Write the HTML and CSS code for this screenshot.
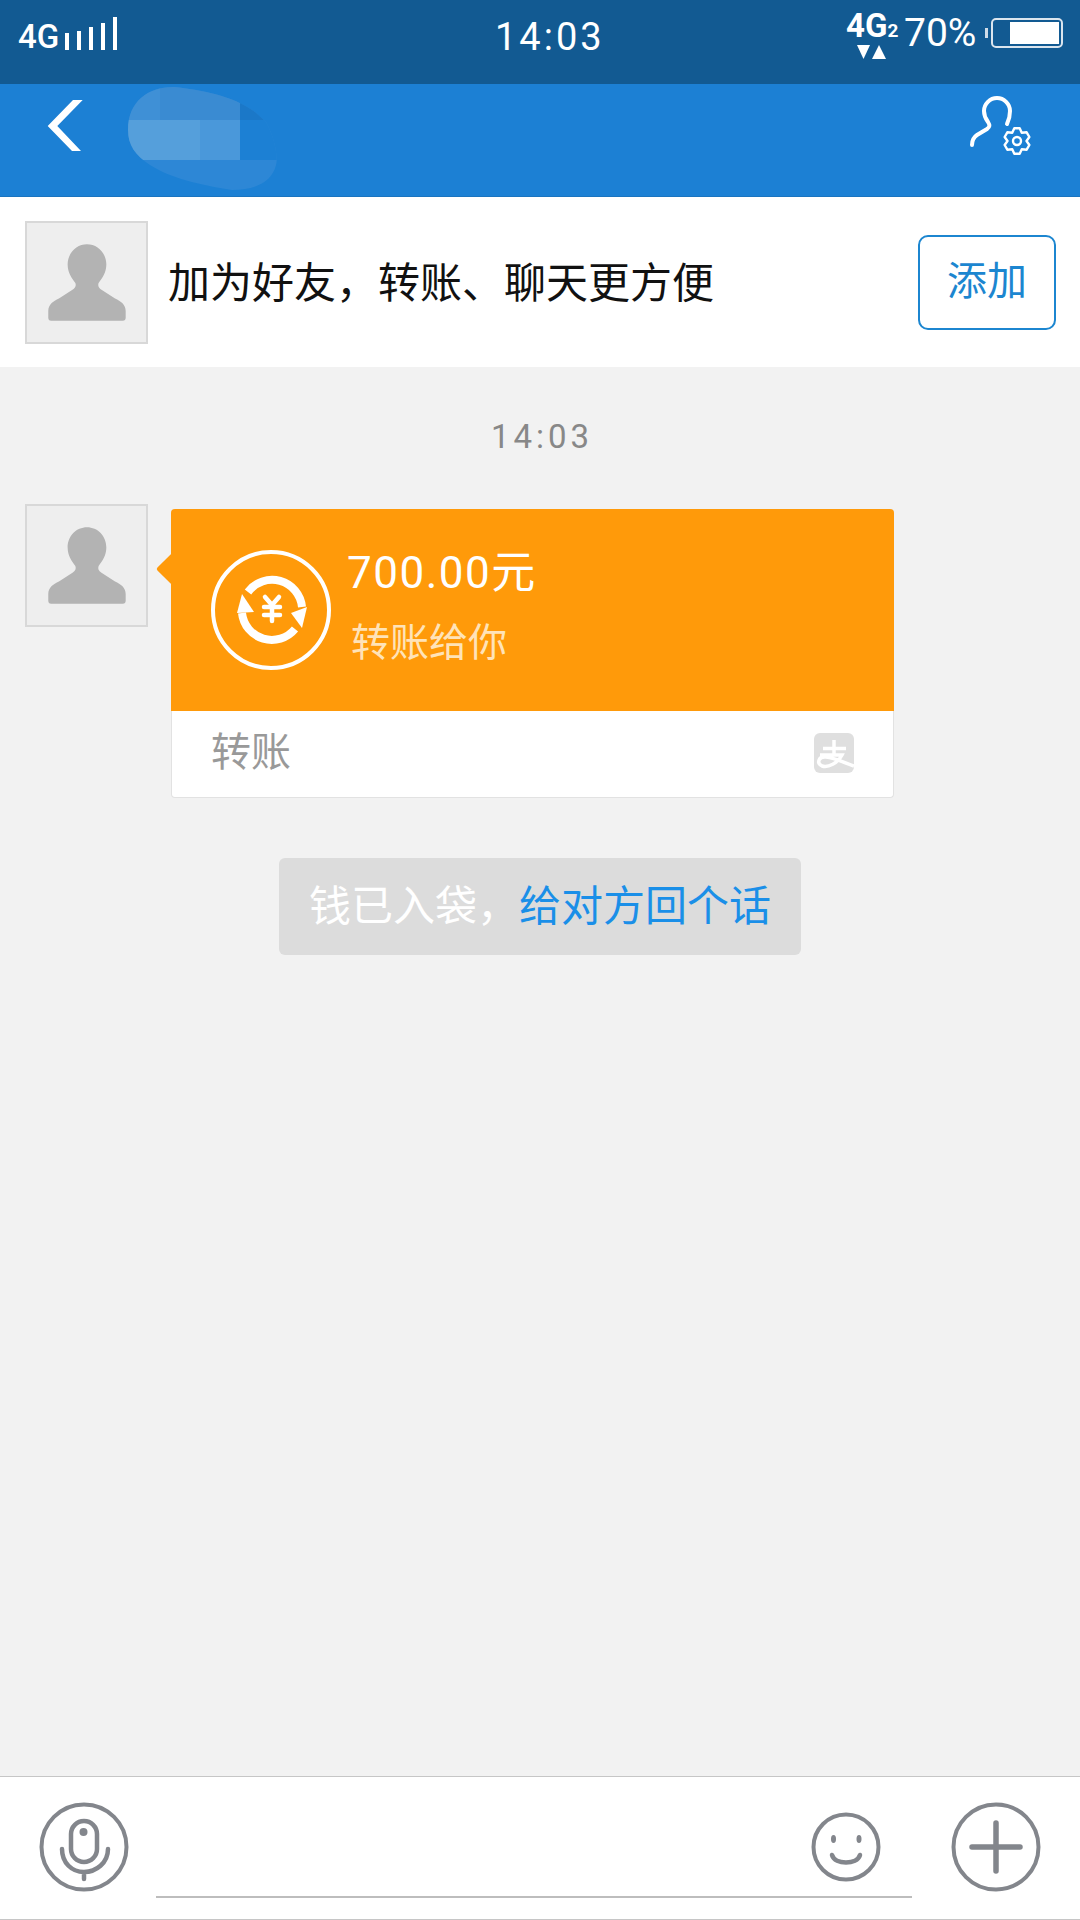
FILE: index.html
```html
<!DOCTYPE html>
<html lang="zh-CN">

<head>
    <meta charset="UTF-8">
    <meta name="viewport" content="width=device-width, initial-scale=1.0">
    <title>转账</title>
    <link rel="stylesheet" href="styles.css">
</head>

<body>
<div class="page">
    <div class="status">
        <div class="signal">
            <span class="net">4G</span>
            <div class="bars">
                <i class="bar b1"></i><i class="bar b2"></i><i class="bar b3"></i><i class="bar b4"></i><i class="bar b5"></i>
            </div>
        </div>
        <div class="clock">14:03</div>
        <div class="status-right">
            <div class="net2">
                <div class="net2-text">4G<small>2</small></div>
                <svg class="net2-arrows" viewBox="0 0 32 14"><polygon points="0,0 13,0 6.500,14" fill="#fff"/><polygon points="15,14 29,14 22,0" fill="#fff"/></svg>
            </div>
            <span class="percent">70%</span>
            <span class="nub"></span>
            <div class="battery"><span class="battery-fill"></span></div>
        </div>
    </div>

    <div class="nav">
        <svg class="back" viewBox="44 96 44 60"><polygon points="73,100 47.700,126 72,151 81,151 57.300,126 82.700,100" fill="#fff"/></svg>
        <svg class="smudge" viewBox="128 86 150 106">
            <defs>
                <clipPath id="blob"><path d="M128 130C128 100 150 86 175 87C200 90 232 95 255 112L266 122C276 140 278 160 276 165C272 182 255 190 232 190C200 185 170 178 150 165C135 155 128 145 128 130Z"/></clipPath>
            </defs>
            <g clip-path="url(#blob)">
                <rect x="128" y="86" width="150" height="106" fill="#2d87d6"/>
                <rect x="128" y="86" width="32" height="34" fill="#3f90d6"/>
                <rect x="160" y="86" width="80" height="34" fill="#3a8bd2"/>
                <rect x="240" y="86" width="38" height="34" fill="#1b78c8"/>
                <rect x="128" y="120" width="72" height="40" fill="#559fdb"/>
                <rect x="200" y="120" width="40" height="40" fill="#4a98da"/>
                <rect x="240" y="120" width="38" height="40" fill="#1c80d4"/>
            </g>
        </svg>
        <svg class="user-gear" viewBox="968 94 66 62">
            <path d="M972 145c0-5 2-8 5-10l10-6c3-2 3-4 1-7c-3-4-4-7-4-11c0-7 6-13 13-13s13 6 13 13c0 5-1 9-3 13" fill="none" stroke="#fff" stroke-width="4" stroke-linecap="round"/>
            <g transform="translate(1017 141)" fill="none" stroke="#fff" stroke-width="2.400" stroke-linejoin="round">
                <polygon points="-2.700,-12.700 2.700,-12.700 4.750,-8.200 9.660,-8.700 12.360,-4 9.500,0 12.360,4 9.660,8.700 4.750,8.200 2.700,12.700 -2.700,12.700 -4.750,8.200 -9.660,8.700 -12.360,4 -9.500,0 -12.360,-4 -9.660,-8.700 -4.750,-8.200"/>
                <circle r="4"/>
            </g>
        </svg>
    </div>

    <div class="friend-bar">
        <div class="avatar">
            <svg viewBox="0 0 123 123"><path d="M62 22c-11 0-20 9-20 21c0 8 4 14 8 19c1 3 0 5-3 7l-14 9c-6 3-11 6-11 13v7c0 2 1 3 3 3h74c2 0 3-1 3-3v-7c0-7-5-10-11-13l-14-9c-3-2-4-4-3-7c4-5 8-11 8-19c0-12-9-21-20-21z" fill="#b3b3b3"/></svg>
        </div>
        <div class="friend-text">加为好友，转账、聊天更方便</div>
        <div class="add-btn">添加</div>
    </div>

    <div class="chat">
        <div class="chat-time">14:03</div>
        <div class="msg">
            <div class="avatar">
                <svg viewBox="0 0 123 123"><path d="M62 22c-11 0-20 9-20 21c0 8 4 14 8 19c1 3 0 5-3 7l-14 9c-6 3-11 6-11 13v7c0 2 1 3 3 3h74c2 0 3-1 3-3v-7c0-7-5-10-11-13l-14-9c-3-2-4-4-3-7c4-5 8-11 8-19c0-12-9-21-20-21z" fill="#b3b3b3"/></svg>
            </div>
            <div class="card">
                <span class="card-arrow"></span>
                <div class="card-top">
                    <svg class="transfer-icon" viewBox="209 548 124 124">
                        <circle cx="271" cy="610" r="58" fill="none" stroke="#fff" stroke-width="4"/>
                        <g fill="none" stroke="#fff" stroke-width="8">
                            <path d="M248 592A30 30 0 0 1 302 607"/>
                            <path d="M295 629A30 30 0 0 1 242 613"/>
                        </g>
                        <polygon points="291,613 307,607 302,628" fill="#fff"/>
                        <polygon points="242,594 254,612 237,613" fill="#fff"/>
                        <g fill="none" stroke="#fff" stroke-width="4.500" stroke-linecap="round">
                            <polyline points="265,597 272,605 279,597"/>
                            <path d="M264 607H280M264 615H280M272 605V621"/>
                        </g>
                    </svg>
                    <div class="card-info">
                        <div class="amount">700.00元</div>
                        <div class="card-sub">转账给你</div>
                    </div>
                </div>
                <div class="card-bottom">
                    <span class="card-label">转账</span>
                    <svg class="alipay" viewBox="0 0 40 40">
                        <rect width="40" height="40" rx="6" fill="#dfdfdf"/>
                        <path d="M9 15.500H32M20 7V22M6 22H28C24 30 14 35 8 33C2 30 5 23 12 24C22 25 30 30 40 33" fill="none" stroke="#fff" stroke-width="3.500"/>
                    </svg>
                </div>
            </div>
        </div>
        <div class="tip">钱已入袋，<span class="tip-link">给对方回个话</span></div>
    </div>

    <div class="input-bar">
        <svg class="round-icon" viewBox="0 0 90 90">
            <circle cx="45" cy="45" r="42.500" fill="none" stroke="#83868c" stroke-width="4"/>
            <rect x="32" y="19" width="26" height="41" rx="13" fill="none" stroke="#83868c" stroke-width="4.500"/>
            <circle cx="44.500" cy="30" r="4" fill="#83868c"/>
            <path d="M23 47c0 14 10 23 22 23s24-9 24-23M45 70v7" fill="none" stroke="#83868c" stroke-width="4.500" stroke-linecap="round"/>
        </svg>
        <div class="input-line">
            <svg class="smile" viewBox="0 0 70 70">
                <circle cx="35" cy="35" r="32.500" fill="none" stroke="#83868c" stroke-width="4"/>
                <ellipse cx="22.500" cy="27" rx="2.500" ry="4" fill="#83868c"/>
                <ellipse cx="48" cy="27" rx="2.500" ry="4" fill="#83868c"/>
                <path d="M21 43c3 10 25 10 28 0" fill="none" stroke="#83868c" stroke-width="4.500" stroke-linecap="round"/>
            </svg>
        </div>
        <svg class="round-icon" viewBox="0 0 90 90">
            <circle cx="45" cy="45" r="42.500" fill="none" stroke="#83868c" stroke-width="4"/>
            <path d="M21 45H69M45 21V69" fill="none" stroke="#83868c" stroke-width="5.500" stroke-linecap="round"/>
        </svg>
    </div>
</div>
</body>
</html>
```

FILE: styles.css
```css
* {
    box-sizing: border-box;
}

body {
    margin: 0;
    padding: 0;
    background-color: #f2f2f2;
    font-family: Roboto, "Noto Sans CJK SC", sans-serif;
}

.page {
    width: 1080px;
    height: 1920px;
    display: flex;
    flex-direction: column;
    position: relative;
    overflow: hidden;
}

/* status bar */
.status {
    height: 84px;
    background-color: #125a92;
    color: #fff;
    display: grid;
    grid-template-columns: 477px auto 1fr;
    padding: 0 17px 0 18px;
}

.signal {
    display: flex;
    align-items: flex-end;
    height: 50px;
}

.net {
    font-size: 33px;
    font-weight: 500;
    line-height: 33px;
    margin-bottom: -3px;
    width: 47px;
}

.bars {
    display: flex;
    align-items: flex-end;
    gap: 8px;
}

.bar {
    display: block;
    width: 4px;
    background-color: #fff;
}

.b1 { height: 17px; }
.b2 { height: 19px; }
.b3 { height: 23px; }
.b4 { height: 27px; }
.b5 { height: 33px; }

.clock {
    font-size: 38px;
    letter-spacing: 3px;
    line-height: 74px;
}

.status-right {
    justify-self: end;
    display: flex;
    align-items: flex-start;
}

.net2 {
    width: 52px;
    margin-right: 5px;
    padding-top: 9px;
}

.net2-text {
    font-size: 33px;
    font-weight: 700;
    line-height: 33px;
    white-space: nowrap;
    margin-left: -1px;
}

.net2-text small {
    font-size: 19px;
}

.net2-arrows {
    display: block;
    width: 32px;
    height: 14px;
    margin: -2px 0 0 10px;
}

.percent {
    font-size: 39px;
    font-weight: 400;
    line-height: 37px;
    margin-top: 15px;
    width: 81px;
}

.nub {
    width: 3px;
    height: 10px;
    margin-top: 28px;
    margin-right: 3px;
    background-color: #cfdce8;
}

.battery {
    width: 72px;
    height: 30px;
    margin-top: 18px;
    border: 2px solid #dbe5ee;
    border-radius: 5px;
    padding: 2px 2px 2px 17px;
}

.battery-fill {
    display: block;
    height: 100%;
    background-color: #fff;
}

/* title bar */
.nav {
    height: 113px;
    background-color: #1c80d4;
    display: flex;
    position: relative;
    padding: 12px 20px 0 44px;
    justify-content: space-between;
    border-bottom: 1px solid #1a74bf;
}

.back {
    width: 44px;
    height: 60px;
}

.user-gear {
    width: 66px;
    height: 62px;
    margin-top: -2px;
    margin-right: 26px;
}

.smudge {
    position: absolute;
    left: 128px;
    top: 2px;
    width: 150px;
    height: 106px;
}

/* add friend */
.friend-bar {
    height: 170px;
    background-color: #fff;
    display: flex;
    align-items: center;
    padding: 0 24px 0 25px;
}

.avatar {
    width: 123px;
    height: 123px;
    flex: none;
    background-color: #eee;
    border: 2px solid #d8d8d8;
}

.avatar svg {
    display: block;
    width: 119px;
    height: 119px;
}

.friend-text {
    flex: 1;
    margin: 0 0 6px 20px;
    font-size: 42px;
    font-weight: 400;
    color: #111;
    white-space: nowrap;
}

.add-btn {
    width: 138px;
    height: 95px;
    border: 2px solid #1c86d0;
    border-radius: 10px;
    color: #1c86d0;
    font-size: 40px;
    font-weight: 400;
    line-height: 89px;
    text-align: center;
}

/* chat */
.chat {
    flex: 1;
    padding: 0 25px;
}

.chat-time {
    text-align: center;
    font-size: 33px;
    letter-spacing: 4px;
    color: #888;
    line-height: 40px;
    padding-top: 50px;
    height: 137px;
    margin-left: 4px;
}

.msg {
    display: flex;
    align-items: flex-start;
}

.card {
    width: 723px;
    margin: 5px 0 0 23px;
    position: relative;
    background-color: #fff;
    border: 1px solid #e2e2e2;
    border-top: none;
    border-radius: 4px;
}

.card-arrow {
    position: absolute;
    left: -11px;
    top: 48px;
    width: 24px;
    height: 24px;
    background-color: #ff9a0a;
    transform: rotate(45deg);
    border-radius: 2px;
}

.card-top {
    height: 202px;
    background-color: #ff9a0a;
    border-radius: 4px 4px 0 0;
    margin: 0 -1px;
    display: flex;
    position: relative;
    padding: 39px 0 0 38px;
}

.transfer-icon {
    width: 124px;
    height: 124px;
    flex: none;
}

.card-info {
    margin-left: 14px;
}

.amount {
    font-size: 44px;
    font-weight: 400;
    letter-spacing: 1.500px;
    color: #fff;
    line-height: 50px;
    margin-top: 0;
}

.card-sub {
    font-size: 39px;
    font-weight: 400;
    color: #ffe3b8;
    line-height: 50px;
    margin: 20px 0 0 4px;
}

.card-bottom {
    height: 86px;
    display: flex;
    align-items: center;
    justify-content: space-between;
    padding: 0 39px 0 39px;
}

.card-label {
    font-size: 40px;
    font-weight: 400;
    color: #999;
    line-height: 50px;
    margin-top: -2px;
}

.alipay {
    width: 40px;
    height: 40px;
    margin-top: -2px;
}

.tip {
    width: 522px;
    height: 97px;
    margin: 60px auto 0;
    background-color: #dcdcdc;
    border-radius: 6px;
    color: #fff;
    font-size: 42px;
    font-weight: 400;
    line-height: 97px;
    text-align: center;
    white-space: nowrap;
}

.tip-link {
    color: #1a8fe8;
}

/* input */
.input-bar {
    height: 144px;
    background-color: #fff;
    border-top: 1px solid #c6c6c6;
    border-bottom: 1px solid #c6c6c6;
    display: flex;
    align-items: flex-start;
    gap: 27px;
    padding: 25px 39px 0;
}

.round-icon {
    width: 90px;
    height: 90px;
    flex: none;
}

.input-line {
    flex: 1;
    height: 96px;
    border-bottom: 2px solid #bdbdbd;
    display: flex;
    justify-content: flex-end;
    padding: 10px 31px 0 0;
}

.input-line + .round-icon {
    margin-left: 12px;
}

.smile {
    width: 70px;
    height: 70px;
}
```
